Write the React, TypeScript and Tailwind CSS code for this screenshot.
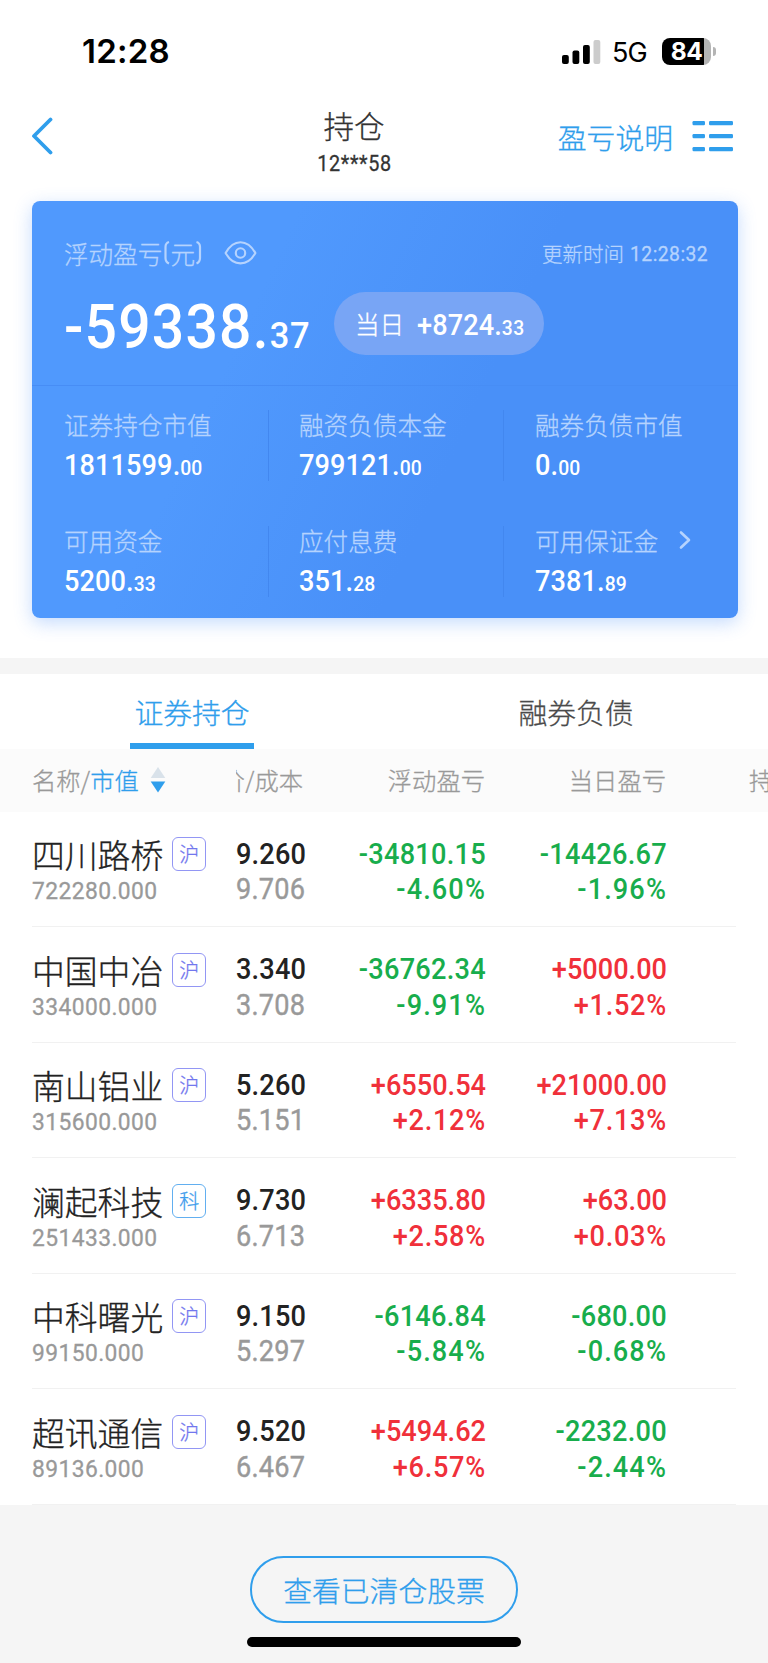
import React from "react";

const CJK = "font-['Noto_Sans_CJK_SC',sans-serif] font-light whitespace-nowrap [-webkit-text-stroke:0.3px_currentColor]";
const NUM = "font-[Roboto,sans-serif] whitespace-nowrap scale-x-[0.92]";

type Tone = "up" | "down";

interface Holding {
  name: string;
  board: "沪" | "科";
  value: string;
  price: string;
  cost: string;
  total: string;
  totalPct: string;
  totalTone: Tone;
  day: string;
  dayPct: string;
  dayTone: Tone;
}

const holdings: Holding[] = [
  { name: "四川路桥", board: "沪", value: "722280.000", price: "9.260", cost: "9.706", total: "-34810.15", totalPct: "-4.60%", totalTone: "down", day: "-14426.67", dayPct: "-1.96%", dayTone: "down" },
  { name: "中国中冶", board: "沪", value: "334000.000", price: "3.340", cost: "3.708", total: "-36762.34", totalPct: "-9.91%", totalTone: "down", day: "+5000.00", dayPct: "+1.52%", dayTone: "up" },
  { name: "南山铝业", board: "沪", value: "315600.000", price: "5.260", cost: "5.151", total: "+6550.54", totalPct: "+2.12%", totalTone: "up", day: "+21000.00", dayPct: "+7.13%", dayTone: "up" },
  { name: "澜起科技", board: "科", value: "251433.000", price: "9.730", cost: "6.713", total: "+6335.80", totalPct: "+2.58%", totalTone: "up", day: "+63.00", dayPct: "+0.03%", dayTone: "up" },
  { name: "中科曙光", board: "沪", value: "99150.000", price: "9.150", cost: "5.297", total: "-6146.84", totalPct: "-5.84%", totalTone: "down", day: "-680.00", dayPct: "-0.68%", dayTone: "down" },
  { name: "超讯通信", board: "沪", value: "89136.000", price: "9.520", cost: "6.467", total: "+5494.62", totalPct: "+6.57%", totalTone: "up", day: "-2232.00", dayPct: "-2.44%", dayTone: "down" },
];

const toneClass: Record<Tone, string> = { up: "text-[#f0303a]", down: "text-[#18ad4c]" };

function StatusBar() {
  return (
    <div className="flex h-[102px] items-center pl-[82px] pr-[52px] pt-[1px]">
      <span className="font-[Inter,sans-serif] text-[33px] font-semibold leading-none tracking-[0.2px] text-black">12:28</span>
      <svg className="ml-auto" width="39" height="26" viewBox="0 0 39 26">
        <rect x="0" y="16" width="6.8" height="9" rx="2" fill="#000" />
        <rect x="10.500" y="11.5" width="6.8" height="13.5" rx="2" fill="#000" />
        <rect x="21" y="6" width="6.8" height="19" rx="2" fill="#000" />
        <rect x="31.500" y="1" width="6.8" height="24" rx="2" fill="#ccc" />
      </svg>
      <span className="ml-[11px] w-[40px] pt-[2px] font-[Inter,sans-serif] text-[27px] leading-[30px] tracking-[-0.8px] text-black">5G</span>
      <div className="ml-[10px] flex items-center">
        <div className="flex h-[27px] w-[49px] items-center justify-center rounded-[8px] bg-[linear-gradient(to_right,#000_42px,#b4b4b4_42px)]">
          <span className="font-[Inter,sans-serif] text-[24.500px] font-bold leading-[27px] tracking-[-0.5px] text-white">84</span>
        </div>
        <div className="ml-[2px] h-[9px] w-[3px] rounded-r-full bg-[#b4b4b4]" />
      </div>
    </div>
  );
}

function NavBar() {
  return (
    <div className="grid h-[99px] grid-cols-[286px_74px_1fr] items-start pl-[31px] pr-[34px]">
      <div className="pt-[15px]">
        <svg width="22" height="38" viewBox="0 0 22 38" fill="none" stroke="#2f9eec" strokeWidth="3.8" strokeLinecap="round" strokeLinejoin="round">
          <path d="M19.5 2.5 3 19l16.5 16.5" />
        </svg>
      </div>
      <div className="flex flex-col items-center pt-[8px] text-[#333]">
        <span className={`${CJK} text-[30.5px] leading-[31px]`}>持仓</span>
        <span className={`${NUM} mt-[12px] text-[21.500px] leading-[21px] tracking-[0.7px] [-webkit-text-stroke:0.3px_currentColor]`}>12***58</span>
      </div>
      <div className="flex justify-end pt-[18px]">
        <span className={`${CJK} mt-[2px] text-[28.8px] leading-[30px] text-[#2f9eec]`}>盈亏说明</span>
        <svg className="ml-[19px]" width="42" height="34" viewBox="0 0 42 34" fill="#2f9eec">
          <rect x="0.5" y="1" width="12.5" height="4.200" rx="1.2" />
          <rect x="17" y="1" width="24" height="4.200" rx="1.2" />
          <rect x="0.5" y="14" width="12.5" height="4.200" rx="1.2" />
          <rect x="17" y="14" width="24" height="4.200" rx="1.2" />
          <rect x="0.5" y="27" width="12.5" height="4.200" rx="1.2" />
          <rect x="17" y="27" width="24" height="4.200" rx="1.2" />
        </svg>
      </div>
    </div>
  );
}

function Stat({ label, whole, cents, arrow, line = true }: { label: string; whole: string; cents: string; arrow?: boolean; line?: boolean }) {
  return (
    <div className={line ? "h-[71px] border-r-[1.5px] border-[#4287ef]" : "h-[71px]"}>
      <div className="flex h-[28px] items-center text-[#b5d3fe]">
        <span className={`${CJK} text-[24.6px] leading-[25px]`}>{label}</span>
        {arrow && (
          <svg className="ml-[20px]" width="14" height="20" viewBox="0 0 14 20" fill="none" stroke="currentColor" strokeWidth="2.6" strokeLinecap="round" strokeLinejoin="round">
            <path d="M3 2.5 11 10 3 17.5" />
          </svg>
        )}
      </div>
      <div className={`${NUM} mt-[12px] h-[30px] origin-left text-[29.500px] font-medium leading-[30px] tracking-[0.1px] text-white`}>
        <span>{whole}.</span>
        <span className="text-[21px] tracking-[0.1px]">{cents}</span>
      </div>
    </div>
  );
}

function SummaryCard() {
  return (
    <section className="ml-[32px] mr-[30px] h-[417px] rounded-[8px] bg-[linear-gradient(115deg,#5099fd_0%,#5099fd_30%,#4990f8_60%,#4990f8_100%)] shadow-[0_5px_18px_rgba(74,144,250,0.32)]">
      <div className="h-[185px] border-b border-[#478df5] pl-[32px] pr-[30px] pt-[36px]">
        <div className="flex h-[32px] items-center text-[#b5d3fe]">
          <span className={`${CJK} text-[24.6px] leading-[25px]`}>浮动盈亏</span>
          <svg className="ml-[1px]" width="7" height="26" viewBox="0 0 7 26" fill="none" stroke="currentColor" strokeWidth="2.200"><path d="M6 2Q2.500 3 2.500 7V18Q2.500 22 6 23.500" /></svg>
          <span className={`${CJK} text-[24.6px] leading-[25px]`}>元</span>
          <svg width="7" height="26" viewBox="0 0 7 26" fill="none" stroke="currentColor" strokeWidth="2.200"><path d="M1.500 2Q5 3 5 7V18Q5 22 1.500 23.500" /></svg>
          <svg className="ml-[22px]" width="33" height="26" viewBox="0 0 33 26" fill="none" stroke="currentColor" strokeWidth="2.1">
            <path d="M1.600 13C5.500 6 10.500 2.200 16.500 2.200S27.500 6 31.400 13C27.500 20 22.500 23.400 16.500 23.400S5.500 20 1.600 13Z" strokeLinejoin="round" />
            <circle cx="16.500" cy="13" r="4.700" />
          </svg>
          <span className={`${CJK} ml-auto text-[20.5px] leading-[22px]`}>更新时间</span>
          <span className={`${NUM} ml-[6px] mt-[2px] w-[78px] origin-left text-[21px] leading-[22px] tracking-[0.5px] [-webkit-text-stroke:0.3px_currentColor]`}>12:28:32</span>
        </div>
        <div className="mt-[23px] flex h-[63px] items-center">
          <div className={`${NUM} mt-[5px] h-[63px] w-[270px] origin-left text-[62px] font-medium leading-[63px] tracking-[1.300px] text-white`}>
            <span>-59338.</span>
            <span className="text-[37.500px] tracking-[0.800px]">37</span>
          </div>
          <div className="flex h-[63px] w-[210px] items-center rounded-full bg-[#78a5f5] pl-[21px] text-white">
            <span className={`${CJK} text-[24.6px] leading-[25px]`}>当日</span>
            <div className={`${NUM} ml-[13px] mt-[2px] h-[30px] origin-left text-[29.500px] font-medium leading-[30px] tracking-[0.1px]`}>
              <span>+8724.</span>
              <span className="text-[21px] tracking-[0.3px]">33</span>
            </div>
          </div>
        </div>
      </div>
      <div className="grid grid-cols-[204.500px_235.500px_auto] gap-y-[45px] pl-[32px] pt-[24px]">
        <Stat label="证券持仓市值" whole="1811599" cents="00" />
        <div className="pl-[30.500px]"><Stat label="融资负债本金" whole="799121" cents="00" /></div>
        <div className="pl-[31px]"><Stat label="融券负债市值" whole="0" cents="00" line={false} /></div>
        <Stat label="可用资金" whole="5200" cents="33" />
        <div className="pl-[30.500px]"><Stat label="应付息费" whole="351" cents="28" /></div>
        <div className="pl-[31px]"><Stat label="可用保证金" whole="7381" cents="89" arrow line={false} /></div>
      </div>
    </section>
  );
}

function Tabs() {
  return (
    <div className={`${CJK} grid h-[74.500px] grid-cols-2 text-[28.8px] leading-[30px]`}>
      <div className="flex justify-center">
        <div className="flex w-[124px] flex-col items-center border-b-[6px] border-[#2f9eec] pt-[23px] text-[#2f9eec]">证券持仓</div>
      </div>
      <div className="flex justify-center pt-[23px] text-[#4a4a4a]">融券负债</div>
    </div>
  );
}

const COLS = "grid grid-cols-[204px_68px_182px_181px_auto]";

function ListHeader() {
  return (
    <div className={`${COLS} ${CJK} h-[63px] items-center overflow-hidden bg-[#fbfbfb] pl-[32px] text-[24.300px] leading-[26px] text-[#999]`}>
      <div className="flex items-center">
        <span>名称/<span className="text-[#2f9eec]">市值</span></span>
        <svg className="ml-[11px]" width="16" height="28" viewBox="0 0 16 28">
          <path d="M8 1 15.300 12H0.700Z" fill="#d9e2ea" />
          <path d="M0.700 15.500H15.300L8 26.500Z" fill="#2f9eec" />
        </svg>
      </div>
      <div className="flex justify-end overflow-hidden pr-[1px]"><span>价/成本</span></div>
      <div className="pr-[1px] text-right">浮动盈亏</div>
      <div className="pr-[1px] text-right">当日盈亏</div>
      <div className="w-[101px] overflow-hidden pl-[82px]">持仓</div>
    </div>
  );
}

function Pair({ top, bottom, tone }: { top: string; bottom: string; tone: Tone }) {
  return (
    <div className={`${NUM} ${toneClass[tone]} origin-right pt-[25px] text-right text-[29.500px] font-medium leading-[35.500px]`}>
      <div className={tone === "up" ? "tracking-[0px]" : "tracking-[0.3px]"}>{top}</div>
      <div className={tone === "up" ? "tracking-[0.8px]" : "tracking-[1.2px]"}>{bottom}</div>
    </div>
  );
}

function HoldingRow({ h }: { h: Holding }) {
  const badge = h.board === "沪" ? "border-[#9296f4] text-[#7277ee]" : "border-[#62aff0] text-[#3d9cec]";
  return (
    <div className="ml-[32px] mr-[32px] border-b border-[#f1f1f1]">
      <div className={`${COLS} h-[114.500px]`}>
        <div className="pt-[24.500px]">
          <div className="flex h-[36px] items-center">
            <span className={`${CJK} text-[32.800px] leading-[34px] text-[#222]`}>{h.name}</span>
            <span className={`${CJK} ml-[9px] flex h-[34px] w-[34px] items-center justify-center rounded-[6px] border-[1.5px] text-[20px] leading-[22px] ${badge}`}>{h.board}</span>
          </div>
          <div className={`${NUM} mt-[6px] origin-left text-[24.800px] leading-[26px] tracking-[0.45px] text-[#999] [-webkit-text-stroke:0.3px_currentColor]`}>{h.value}</div>
        </div>
        <div className={`${NUM} origin-left pt-[25px] text-[29.500px] leading-[35.500px] tracking-[0.2px]`}>
          <div className="font-medium text-[#222]">{h.price}</div>
          <div className="text-[#999] [-webkit-text-stroke:0.4px_currentColor]">{h.cost}</div>
        </div>
        <Pair top={h.total} bottom={h.totalPct} tone={h.totalTone} />
        <Pair top={h.day} bottom={h.dayPct} tone={h.dayTone} />
      </div>
    </div>
  );
}

export default function App() {
  return (
    <main className="flex h-[1663px] w-[768px] flex-col overflow-hidden bg-white">
      <StatusBar />
      <NavBar />
      <SummaryCard />
      <div className="mt-[40px] h-[16px] shrink-0 bg-[#f5f5f5]" />
      <Tabs />
      <ListHeader />
      <div>
        {holdings.map((h) => (
          <HoldingRow key={h.name} h={h} />
        ))}
      </div>
      <footer className="flex flex-1 flex-col items-center bg-[#f5f5f5] pt-[51.500px]">
        <button className={`${CJK} h-[67px] w-[268px] shrink-0 rounded-full border-2 border-[#2f9eec] text-[28.800px] leading-[30px] text-[#2f9eec]`}>查看已清仓股票</button>
        <div className="mt-[14px] h-[10px] w-[274px] shrink-0 rounded-full bg-black" />
      </footer>
    </main>
  );
}
